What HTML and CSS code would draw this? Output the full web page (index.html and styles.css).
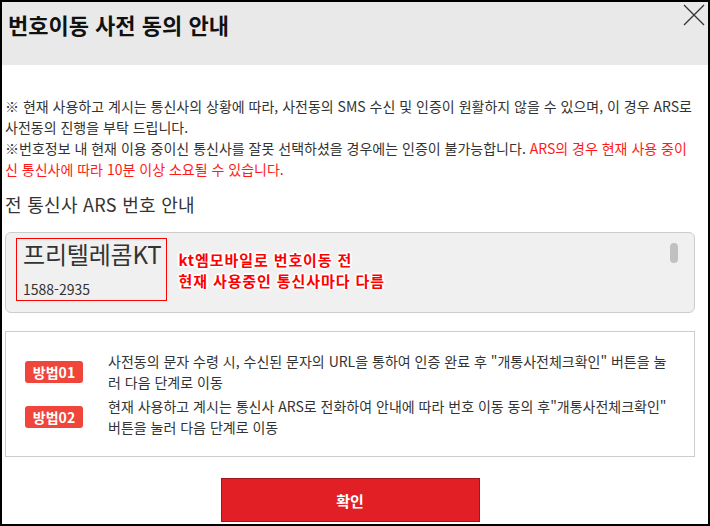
FILE: index.html
```html
<!DOCTYPE html>
<html lang="ko">
<head>
  <meta charset="UTF-8" />
  <meta name="viewport" content="width=device-width, initial-scale=1.0"/>
  <title>번호이동 사전 동의 안내</title>
  <link rel="stylesheet" href="styles.css">
</head>
<body>

  <div class="popup">
    <div class="popup-head">
      <h1>번호이동 사전 동의 안내</h1>
      <button class="close-btn" aria-label="닫기">
        <svg width="22" height="22" viewBox="0 0 22 22">
          <path d="M1 1 L21 21 M21 1 L1 21" stroke="#333" stroke-width="1.3" fill="none"/>
        </svg>
      </button>
    </div>

    <div class="popup-body">
      <p class="notice">※ 현재 사용하고 계시는 통신사의 상황에 따라, 사전동의 SMS 수신 및 인증이 원활하지 않을 수 있으며, 이 경우 ARS로<br>사전동의 진행을 부탁 드립니다.</p>
      <p class="notice">※번호정보 내 현재 이용 중이신 통신사를 잘못 선택하셨을 경우에는 인증이 불가능합니다. <span class="warn">ARS의 경우 현재 사용 중이<br>신 통신사에 따라 10분 이상 소요될 수 있습니다.</span></p>

      <h2>전 통신사 ARS 번호 안내</h2>

      <div class="carrier-box">
        <div class="carrier">
          <div class="carrier-name">프리텔레콤KT</div>
          <div class="carrier-num">1588-2935</div>
        </div>
        <div class="memo">kt엠모바일로 번호이동 전<br>현재 사용중인 통신사마다 다름</div>
        <span class="scroll-thumb"></span>
      </div>

      <div class="method-box">
        <div class="method">
          <span class="badge">방법01</span>
          <p>사전동의 문자 수령 시, 수신된 문자의 URL을 통하여 인증 완료 후 "개통사전체크확인" 버튼을 눌<br>러 다음 단계로 이동</p>
        </div>
        <div class="method">
          <span class="badge">방법02</span>
          <p>현재 사용하고 계시는 통신사 ARS로 전화하여 안내에 따라 번호 이동 동의 후"개통사전체크확인"<br>버튼을 눌러 다음 단계로 이동</p>
        </div>
      </div>

      <div class="btn-wrap">
        <button class="ok-btn">확인</button>
      </div>
    </div>
  </div>

</body>
</html>
```

FILE: styles.css
```css
body {
  margin: 0;
  font-family: "Noto Sans CJK KR", "Noto Sans", sans-serif;
  color: #333;
  background: #fff;
}
.popup {
  width: 710px;
  height: 526px;
  box-sizing: border-box;
  border: 2px solid #000;
  overflow: hidden;
}
.popup-head {
  position: relative;
  height: 63px;
  background: #e9e9e9;
  padding: 6px 6px 0;
  box-sizing: border-box;
}
.popup-head h1 {
  margin: 0;
  font-size: 22px;
  line-height: 32px;
  font-weight: bold;
  color: #111;
}
.close-btn {
  position: absolute;
  top: 2px;
  right: 3px;
  width: 22px;
  height: 22px;
  padding: 0;
  border: none;
  background: none;
}
.close-btn svg {
  display: block;
}
.popup-body {
  padding: 31px 13px 0 3px;
}
.notice {
  margin: 0;
  font-size: 14px;
  line-height: 21px;
  white-space: nowrap;
}
.warn {
  color: #ff1a1a;
}
h2 {
  margin: 12px 0 16px;
  font-size: 18px;
  line-height: 24px;
  font-weight: normal;
  letter-spacing: 0.3px;
}
.carrier-box {
  position: relative;
  display: flex;
  align-items: center;
  height: 81px;
  box-sizing: border-box;
  padding: 0 10px 6px;
  background: #f0f0f0;
  border: 1px solid #ccc;
  border-radius: 6px;
}
.carrier {
  flex-shrink: 0;
  padding: 2px 5px 2px 6px;
  border: 1px solid #f00;
  white-space: nowrap;
}
.carrier-name {
  font-size: 24px;
  line-height: 26px;
  letter-spacing: -0.2px;
}
.carrier-num {
  margin-top: 13px;
  font-size: 14px;
  line-height: 18px;
}
.memo {
  margin-left: 11px;
  font-size: 15px;
  line-height: 21px;
  font-weight: bold;
  letter-spacing: 0.9px;
  white-space: nowrap;
  color: #f00;
  text-shadow: 1px 1px 0 #fff, -1px -1px 0 #fff, 1px -1px 0 #fff, -1px 1px 0 #fff,
    0 2px 1px #fff, 0 -2px 1px #fff, 2px 0 1px #fff, -2px 0 1px #fff;
}
.scroll-thumb {
  position: absolute;
  top: 10px;
  right: 16px;
  width: 8px;
  height: 20px;
  border-radius: 4px;
  background: #c1c1c1;
}
.method-box {
  margin-top: 18px;
  padding: 19px 20px 18px 19px;
  border: 1px solid #ccc;
}
.method {
  display: flex;
  align-items: center;
  gap: 25px;
}
.method + .method {
  margin-top: 3px;
}
.method p {
  margin: 0;
  font-size: 14px;
  line-height: 21px;
  white-space: nowrap;
}
.badge {
  width: 58px;
  height: 22px;
  flex-shrink: 0;
  border-radius: 3px;
  background: #f0453a;
  color: #fff;
  font-size: 14px;
  font-weight: bold;
  line-height: 22px;
  text-align: center;
}
.btn-wrap {
  display: flex;
  justify-content: center;
  margin-top: 21px;
}
.ok-btn {
  width: 259px;
  height: 44px;
  border: 1px solid #a3161b;
  background: #e31f26;
  color: #fff;
  font-family: inherit;
  font-size: 15px;
  font-weight: bold;
}
```
